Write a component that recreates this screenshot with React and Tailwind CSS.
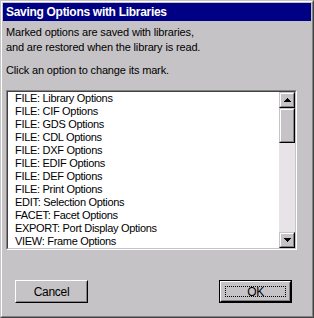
import React from 'react';

const options = [
  'FILE: Library Options',
  'FILE: CIF Options',
  'FILE: GDS Options',
  'FILE: CDL Options',
  'FILE: DXF Options',
  'FILE: EDIF Options',
  'FILE: DEF Options',
  'FILE: Print Options',
  'EDIT: Selection Options',
  'FACET: Facet Options',
  'EXPORT: Port Display Options',
  'VIEW: Frame Options',
];

const font = { fontFamily: '"Liberation Sans", Arial, sans-serif' };

const Arrow = ({ down }) => (
  <svg width="7" height="4" viewBox="0 0 7 4" className={down ? 'rotate-180' : ''}>
    <path d="M3 0h1v1h1v1h1v1h1v1H0V3h1V2h1V1h1z" fill="#000" />
  </svg>
);

const ScrollButton = ({ down }) => (
  <div className="h-[16px] w-[16px] border border-t-[#c6c3c6] border-l-[#c6c3c6] border-b-black border-r-black">
    <div className="h-full w-full bg-[#c6c3c6] border border-t-white border-l-white border-b-[#848284] border-r-[#848284] flex items-center justify-center">
      <Arrow down={down} />
    </div>
  </div>
);

const Button = ({ children, isDefault }) => {
  const inner = (
    <div className="h-full w-full border border-t-white border-l-white border-b-black border-r-black">
      <div className="h-full w-full border border-t-[#c6c3c6] border-l-[#c6c3c6] border-b-[#848284] border-r-[#848284] flex items-center justify-center">
        {isDefault ? (
          <div className="w-[calc(100%-6px)] h-[calc(100%-6px)] border border-dotted border-black flex items-center justify-center">
            {children}
          </div>
        ) : (
          children
        )}
      </div>
    </div>
  );
  return (
    <div className={`w-[73px] h-[23px] text-[12px] text-black tracking-[-0.3px] ${isDefault ? 'border border-black' : ''}`}>
      {inner}
    </div>
  );
};

export default function App() {
  return (
    <div className="w-[314px] h-[318px] bg-[#c6c3c6] border border-t-[#c6c3c6] border-l-[#c6c3c6] border-b-[#424142] border-r-[#424142]" style={font}>
      <div className="h-full border border-t-white border-l-white border-b-[#848284] border-r-[#848284] p-px flex flex-col">
        <div className="h-[18px] bg-[#000084] text-white font-bold text-[12px] leading-[18px] pl-[3px] tracking-[-0.3px]">
          Saving Options with Libraries
        </div>
        <div className="pl-[3px] text-[11px] leading-[15px] tracking-[-0.15px] text-black">
          <p className="mt-[4px]">Marked options are saved with libraries,</p>
          <p>and are restored when the library is read.</p>
          <p className="mt-[8px]">Click an option to change its mark.</p>
        </div>
        <div className="ml-[3px] mt-[12px] w-[291px] h-[160px] border border-t-[#848284] border-l-[#848284] border-b-white border-r-white">
          <div className="h-full w-full border border-t-[#424142] border-l-[#424142] border-b-[#c6c3c6] border-r-[#c6c3c6] bg-white flex">
            <ul className="flex-1 pl-[7px] text-[11px] leading-[13px] tracking-[-0.3px] text-black">
              {options.map((o) => (
                <li key={o} className="whitespace-nowrap">{o}</li>
              ))}
            </ul>
            <div className="w-[16px] flex flex-col bg-[#e7e3e7]">
              <ScrollButton />
              <div className="h-[35px] w-[16px] border border-t-[#c6c3c6] border-l-[#c6c3c6] border-b-black border-r-black">
                <div className="h-full w-full bg-[#c6c3c6] border border-t-white border-l-white border-b-[#848284] border-r-[#848284]" />
              </div>
              <div className="flex-1" />
              <ScrollButton down />
            </div>
          </div>
        </div>
        <div className="mt-[30px] flex justify-between pl-[12px] pr-[19px]">
          <Button>Cancel</Button>
          <Button isDefault>OK</Button>
        </div>
      </div>
    </div>
  );
}
